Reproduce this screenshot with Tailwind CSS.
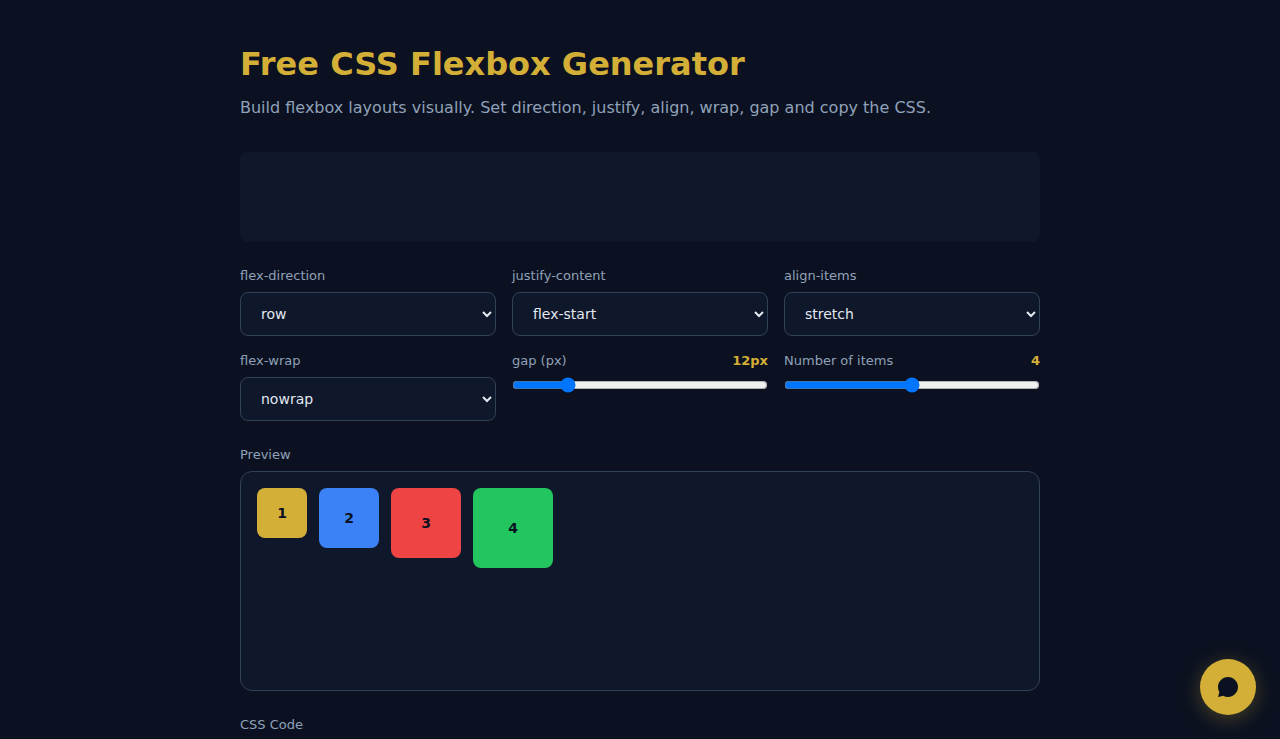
<!DOCTYPE html>
<html lang="en">

<head>
    <meta charset="UTF-8">
    <meta name="viewport" content="width=device-width, initial-scale=1.0">
    <title>Free CSS Flexbox Generator</title>
    <script src="https://cdn.jsdelivr.net/npm/@tailwindcss/browser@4"></script>
</head>

<body class="min-h-screen bg-[#0b1120] text-slate-200 font-['DejaVu_Sans',sans-serif]">
    <main class="max-w-[800px] mx-auto pt-10">
        <h1 class="text-[32px] leading-12 font-bold text-[#d4af37]">Free CSS Flexbox Generator</h1>
        <p class="mt-2 leading-6 text-slate-400">Build flexbox layouts visually. Set direction, justify, align, wrap, gap and copy the CSS.</p>

        <div class="mt-8 h-[90px] rounded-lg bg-slate-900"></div>

        <div class="mt-6 grid grid-cols-3 gap-x-4 gap-y-[15px] text-[13px] leading-5 text-slate-400">
            <div>
                <label for="direction" class="block mb-1.5">flex-direction</label>
                <select id="direction" class="block w-full h-11 px-4 rounded-lg border border-slate-700 bg-slate-900 text-sm text-slate-200">
                    <option>row</option>
                    <option>row-reverse</option>
                    <option>column</option>
                    <option>column-reverse</option>
                </select>
            </div>
            <div>
                <label for="justify" class="block mb-1.5">justify-content</label>
                <select id="justify" class="block w-full h-11 px-4 rounded-lg border border-slate-700 bg-slate-900 text-sm text-slate-200">
                    <option>flex-start</option>
                    <option>center</option>
                    <option>flex-end</option>
                    <option>space-between</option>
                    <option>space-around</option>
                    <option>space-evenly</option>
                </select>
            </div>
            <div>
                <label for="align" class="block mb-1.5">align-items</label>
                <select id="align" class="block w-full h-11 px-4 rounded-lg border border-slate-700 bg-slate-900 text-sm text-slate-200">
                    <option>stretch</option>
                    <option>flex-start</option>
                    <option>center</option>
                    <option>flex-end</option>
                    <option>baseline</option>
                </select>
            </div>
            <div>
                <label for="wrap" class="block mb-1.5">flex-wrap</label>
                <select id="wrap" class="block w-full h-11 px-4 rounded-lg border border-slate-700 bg-slate-900 text-sm text-slate-200">
                    <option>nowrap</option>
                    <option>wrap</option>
                    <option>wrap-reverse</option>
                </select>
            </div>
            <div>
                <label for="gap" class="flex justify-between mb-1.5">gap (px) <b id="gap-value" class="text-[#d4af37]">12px</b></label>
                <input id="gap" type="range" min="0" max="60" value="12" class="block w-full">
            </div>
            <div>
                <label for="count" class="flex justify-between mb-1.5">Number of items <b id="count-value" class="text-[#d4af37]">4</b></label>
                <input id="count" type="range" min="1" max="7" value="4" class="block w-full">
            </div>
        </div>

        <h2 class="mt-6 mb-1.5 text-[13px] leading-5 text-slate-400">Preview</h2>
        <div id="preview" class="flex gap-3 min-h-[220px] p-4 rounded-xl border border-slate-700 bg-slate-900 text-sm leading-[22px] font-bold text-[#0b1120]">
            <div class="flex items-center justify-center size-[50px] rounded-lg bg-[#d4af37]">1</div>
            <div class="flex items-center justify-center size-[60px] rounded-lg bg-[#3b82f6]">2</div>
            <div class="flex items-center justify-center size-[70px] rounded-lg bg-[#ef4444]">3</div>
            <div class="flex items-center justify-center size-[80px] rounded-lg bg-[#22c55e]">4</div>
        </div>

        <h2 class="mt-6 text-[13px] leading-5 text-slate-400">CSS Code</h2>
    </main>

    <button aria-label="Open chat" class="fixed right-6 bottom-6 flex items-center justify-center size-14 rounded-full bg-[#d4af37] text-[#0b1120] shadow-[0_4px_20px_rgba(212,175,55,0.3)]">
        <svg class="size-6" viewBox="0 0 24 24" fill="currentColor">
            <path d="M12 2C6.48 2 2 6.48 2 12c0 1.820.49 3.530 1.340 5L2.100 22l5.100-1.230c1.440.790 3.070 1.230 4.800 1.230 5.520 0 10-4.480 10-10S17.520 2 12 2z" />
        </svg>
    </button>

    <script>
        const previewEl = document.getElementById("preview");
        const gapEl = document.getElementById("gap");
        const countEl = document.getElementById("count");

        function bindSelect(id, property) {
            const el = document.getElementById(id);
            el.addEventListener("change", () => {
                previewEl.style[property] = el.value;
            });
        }

        bindSelect("direction", "flexDirection");
        bindSelect("justify", "justifyContent");
        bindSelect("align", "alignItems");
        bindSelect("wrap", "flexWrap");

        gapEl.addEventListener("input", () => {
            previewEl.style.gap = gapEl.value + "px";
            document.getElementById("gap-value").textContent = gapEl.value + "px";
        });

        const items = [...previewEl.children];
        countEl.addEventListener("input", () => {
            const count = Number(countEl.value);
            const shown = [];
            for (let i = 0; i < count; i++) {
                const item = items[i % items.length].cloneNode(true);
                item.textContent = i + 1;
                shown.push(item);
            }
            previewEl.replaceChildren(...shown);
            document.getElementById("count-value").textContent = count;
        });
    </script>
</body>

</html>
